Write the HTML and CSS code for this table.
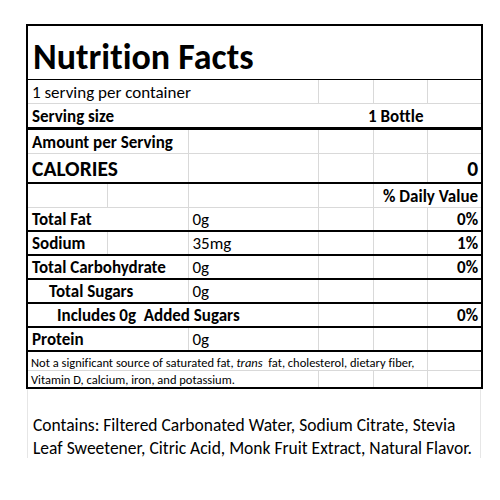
FILE: index.html
```html
<!DOCTYPE html>
<html>
<head>
<meta charset="utf-8">
<link rel="stylesheet" href="styles.css">
</head>
<body>
<div class="sheet">
  <table class="nf">
    <colgroup>
      <col class="c1"><col class="c2"><col class="c3"><col class="c4"><col class="c5"><col class="c6">
    </colgroup>
    <tr class="r-title"><td colspan="6" class="title">Nutrition Facts</td></tr>
    <tr class="r-servings"><td colspan="3">1 serving per container</td><td></td><td></td><td></td></tr>
    <tr class="r-size thick"><td colspan="3" class="b">Serving size</td><td colspan="2" class="b right">1 Bottle</td><td class="nol"></td></tr>
    <tr class="r-amount"><td colspan="2" class="b">Amount per Serving</td><td></td><td></td><td></td><td></td></tr>
    <tr class="r-cal dark2"><td colspan="2" class="cal">CALORIES</td><td></td><td></td><td></td><td class="cal right">0</td></tr>
    <tr class="r-dv"><td></td><td></td><td></td><td></td><td colspan="2" class="b right">% Daily Value</td></tr>
    <tr class="r-n dark"><td colspan="2" class="b">Total Fat</td><td>0g</td><td></td><td></td><td class="b right">0%</td></tr>
    <tr class="r-n dark"><td class="b">Sodium</td><td></td><td>35mg</td><td></td><td></td><td class="b right">1%</td></tr>
    <tr class="r-n dark"><td colspan="2" class="b">Total Carbohydrate</td><td>0g</td><td></td><td></td><td class="b right">0%</td></tr>
    <tr class="r-n dark"><td colspan="2" class="b ind1">Total Sugars</td><td>0g</td><td></td><td></td><td></td></tr>
    <tr class="r-n dark"><td colspan="3" class="b ind2">Includes 0g&nbsp; Added Sugars</td><td></td><td></td><td class="b right">0%</td></tr>
    <tr class="r-n dark"><td colspan="2" class="b">Protein</td><td>0g</td><td></td><td></td><td></td></tr>
    <tr class="r-foot1"><td colspan="5" class="foot">Not a significant source of saturated fat, <i>trans</i>&nbsp; fat, cholesterol, dietary fiber,</td><td></td></tr>
    <tr class="r-foot2 dark2"><td colspan="3" class="foot">Vitamin D, calcium, iron, and potassium.</td><td></td><td></td><td></td></tr>
  </table>
  <div class="below">
    <p class="contains">Contains: Filtered Carbonated Water, Sodium Citrate, Stevia<br>Leaf Sweetener, Citric Acid, Monk Fruit Extract, Natural Flavor.</p>
  </div>
</div>
</body>
</html>
```
FILE: styles.css
```css
html, body {
  margin: 0;
  padding: 0;
  background: #fff;
}
body {
  font-family: Carlito, Lato, "Liberation Sans", sans-serif;
  font-variant-ligatures: none;
  color: #000;
}
.sheet {
  padding: 24px 0 0 26px;
  width: 458px;
}
.nf {
  border-collapse: collapse;
  table-layout: fixed;
  width: 457px;
  border: 2px solid #000;
}
.c1 { width: 80px; }
.c2 { width: 81px; }
.c3 { width: 130px; }
.c4 { width: 55px; }
.c5 { width: 54px; }
.c6 { width: 55px; }
.nf td {
  border: 1px solid #d9d9d9;
  padding: 0 3px 0 4px;
  vertical-align: bottom;
  white-space: nowrap;
  overflow: visible;
  font-size: 17px;
  line-height: 20px;
}
.nf tr > td:first-child { border-left: 2px solid #000; }
.nf tr > td:last-child { border-right: 2px solid #000; }
.nf td.title {
  border: 2px solid #000;
  border-bottom: 1px solid #000;
  font-size: 36px;
  font-weight: 700;
  line-height: 42px;
  padding: 0 0 1px 5px;
}
.r-title { height: 54px; }
.r-servings { height: 24px; }
.r-size { height: 25px; }
.r-amount { height: 25px; }
.r-cal { height: 30px; }
.r-dv { height: 24px; }
.r-n { height: 24px; }
.r-foot1 { height: 19px; }
.r-foot2 { height: 18px; }
.thick td { border-bottom: 3px solid #000; }
.dark td { border-bottom: 2px solid #000; }
.dark2 td { border-bottom: 2px solid #000; }
.r-size td { border-left-color: transparent; border-right-color: transparent; }
.r-size td:first-child { border-left: 2px solid #000; }
.r-size td:last-child { border-right: 2px solid #000; }
.b { font-weight: 700; }
.right { text-align: right; }
.nf td.right { padding-right: 3px; padding-left: 0; }
.nf td.cal {
  font-size: 21.5px;
  font-weight: 700;
  line-height: 24px;
  padding-bottom: 1px;
}
.ind1 { padding-left: 21px !important; }
.ind2 { padding-left: 29px !important; }
.nf td.foot {
  font-size: 12.5px;
  line-height: 15px;
  padding-left: 3px;
  padding-bottom: 0;
}
.below {
  border-left: 1px solid #e6e6e6;
  border-right: 1px solid #e6e6e6;
  margin-left: 1px;
  width: 454px;
  height: 69px;
  padding-top: 25px;
  box-sizing: border-box;
}
.contains {
  margin: 0;
  padding-left: 5px;
  font-size: 17.5px;
  line-height: 23px;
  white-space: nowrap;
}
```
